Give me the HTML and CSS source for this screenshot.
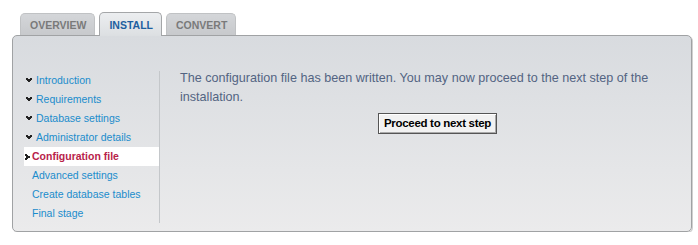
FILE: index.html
```html
<!DOCTYPE html>
<html>
<head>
<meta charset="utf-8">
<link rel="stylesheet" href="styles.css">
</head>
<body>
<div class="wrap">
  <div class="tabs">
    <div class="tab">OVERVIEW</div>
    <div class="tab active">INSTALL</div>
    <div class="tab">CONVERT</div>
  </div>
  <div class="panel">
    <ul class="menu">
      <li class="done"><svg class="ico" width="6" height="5" viewBox="0 0 6 5"><path d="M0 0h2v1h2v-1h2v2h-1v1h-1v1h-2v-1h-1v-1h-1z" fill="#222"/></svg>Introduction</li>
      <li class="done"><svg class="ico" width="6" height="5" viewBox="0 0 6 5"><path d="M0 0h2v1h2v-1h2v2h-1v1h-1v1h-2v-1h-1v-1h-1z" fill="#222"/></svg>Requirements</li>
      <li class="done"><svg class="ico" width="6" height="5" viewBox="0 0 6 5"><path d="M0 0h2v1h2v-1h2v2h-1v1h-1v1h-2v-1h-1v-1h-1z" fill="#222"/></svg>Database settings</li>
      <li class="done"><svg class="ico" width="6" height="5" viewBox="0 0 6 5"><path d="M0 0h2v1h2v-1h2v2h-1v1h-1v1h-2v-1h-1v-1h-1z" fill="#222"/></svg>Administrator details</li>
      <li class="current"><svg class="ico" width="5" height="6" viewBox="0 0 5 6"><path d="M0 0h2v1h1v1h2v2h-2v1h-1v1h-2v-2h1v-2h-1z" fill="#222"/></svg>Configuration file</li>
      <li>Advanced settings</li>
      <li>Create database tables</li>
      <li>Final stage</li>
    </ul>
    <div class="main">
      <p class="msg">The configuration file has been written. You may now proceed to the next step of the installation.</p>
      <div class="actions"><button class="btn" type="button">Proceed to next step</button></div>
    </div>
  </div>
</div>
</body>
</html>
```
FILE: styles.css
```css
html, body {
  margin: 0;
  padding: 0;
  background: #ffffff;
}
.wrap {
  padding: 12px 6px 0 12px;
  font-family: "Liberation Sans", Arial, sans-serif;
}
.tabs {
  display: flex;
  align-items: flex-end;
  gap: 4px;
  padding-left: 8px;
  position: relative;
  z-index: 1;
}
.tab {
  height: 21px;
  line-height: 23px;
  padding: 0 8px 0 9px;
  font-size: 10.5px;
  font-weight: bold;
  color: #7a7a7a;
  background: linear-gradient(#d4d6d9, #c7c9cc);
  border: 1px solid #c0c2c4;
  border-bottom: none;
  border-radius: 5px 5px 0 0;
}
.tab.active {
  height: 23px;
  line-height: 25px;
  color: #1d5fa0;
  background: linear-gradient(#eceef0, #dcdfe2);
  border-color: #a4a6a8;
  margin-bottom: -1px;
}
.panel {
  display: flex;
  border: 1px solid #a0a2a4;
  border-radius: 5px;
  background: linear-gradient(#d8dbdf, #ebebec);
  box-shadow: 1px 1px 0 #d0d0d0;
  padding: 35px 0 0 11px;
  box-sizing: border-box;
  height: 197px;
}
.menu {
  list-style: none;
  margin: 0;
  padding: 0;
  width: 135px;
  height: 152px;
  border-right: 1px solid #c4c7ca;
  font-size: 10.5px;
}
.menu li {
  height: 19px;
  line-height: 19px;
  padding-left: 8px;
  color: #1a8ccc;
  display: flex;
  align-items: center;
  white-space: nowrap;
}
.menu li.done {
  padding-left: 2px;
}
.menu li.done .ico {
  margin-right: 4px;
}
.menu li.current {
  background: #ffffff;
  color: #b8224a;
  font-weight: bold;
  padding-left: 1px;
}
.menu li.current .ico {
  margin-right: 2px;
}
.main {
  flex: 1;
  padding: 0 0 0 20px;
}
.msg {
  margin: 0;
  font-size: 12.6px;
  line-height: 19px;
  color: #536482;
  margin-top: -2px;
}
.actions {
  text-align: center;
  margin-top: 6px;
  padding-left: 4px;
}
.btn {
  font-family: "Liberation Sans", Arial, sans-serif;
  font-size: 11.5px;
  font-weight: bold;
  color: #000;
  background: #f2f2f2;
  border: 1px solid #555;
  box-shadow: inset 1px 1px 0 #fff, inset -1px -1px 0 #aaa;
  padding: 3px 5px;
  height: 21px;
  line-height: 13px;
  letter-spacing: -0.3px;
}
```
